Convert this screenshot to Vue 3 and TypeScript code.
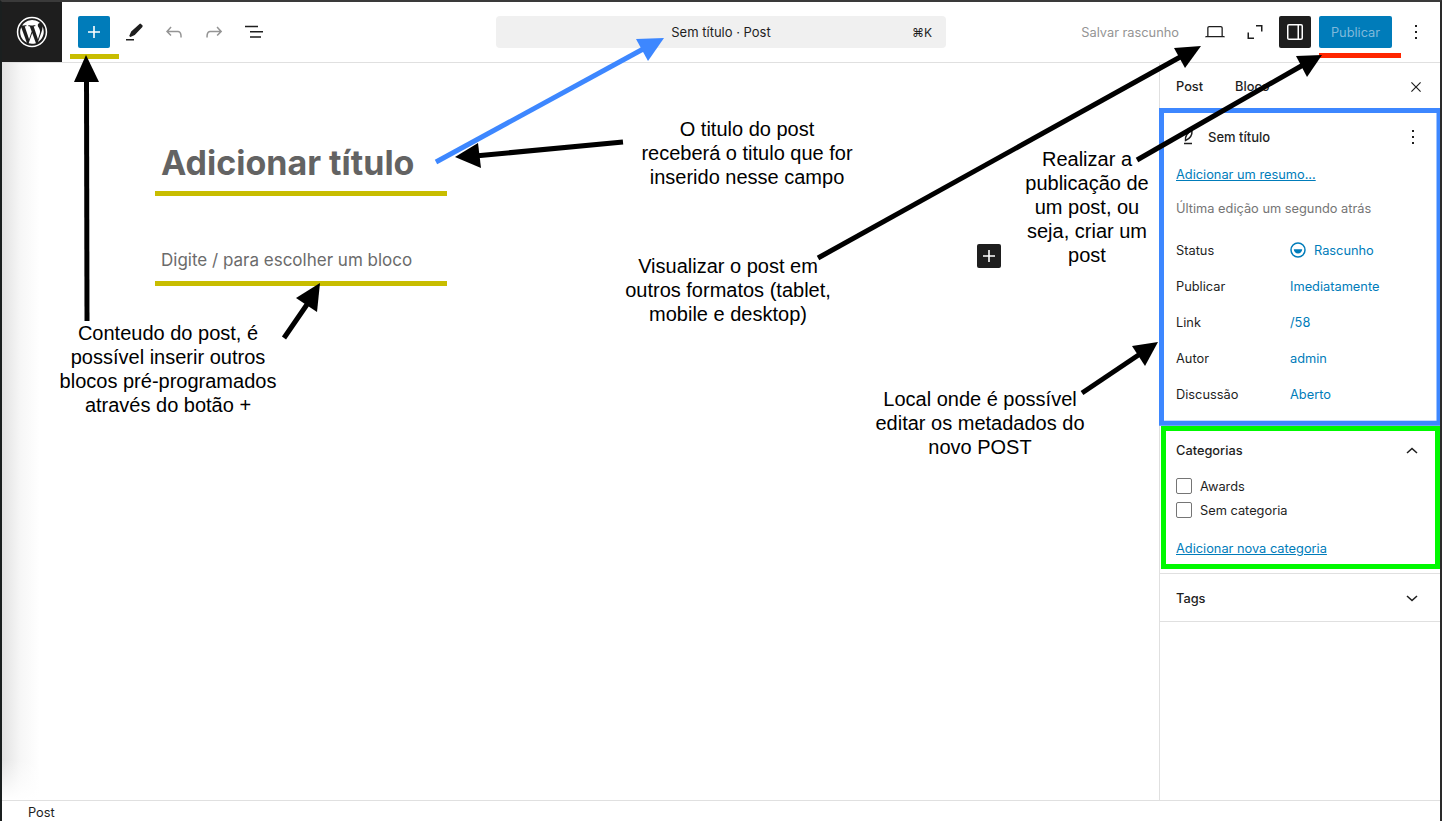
<script setup lang="ts">
interface Note {
  x: number
  y: number
  lines: string[]
}

interface Arrow {
  from: [number, number]
  to: [number, number]
  head: string
  color: string
}

const metaRows = [
  { label: 'Publicar', value: 'Imediatamente' },
  { label: 'Link', value: '/58' },
  { label: 'Autor', value: 'admin' },
  { label: 'Discussão', value: 'Aberto' }
]

const categories = ['Awards', 'Sem categoria']

const notes: Note[] = [
  { x: 168, y: 321, lines: ['Conteudo do post, é', 'possível inserir outros', 'blocos pré-programados', 'através do botão +'] },
  { x: 747, y: 117, lines: ['O titulo do post', 'receberá o titulo que for', 'inserido nesse campo'] },
  { x: 728, y: 254, lines: ['Visualizar o post em', 'outros formatos (tablet,', 'mobile e desktop)'] },
  { x: 1087, y: 147, lines: ['Realizar a', 'publicação de', 'um post, ou', 'seja, criar um', 'post'] },
  { x: 980, y: 387, lines: ['Local onde é possível', 'editar os metadados do', 'novo POST'] }
]

const arrows: Arrow[] = [
  { from: [87, 321], to: [86.5, 76], head: '86,55 74,82 99,82', color: '#000' },
  { from: [436, 162], to: [645, 48], head: '664,38 636,39 648,61', color: '#3d87ff' },
  { from: [623, 142], to: [475, 156], head: '455,157 478,143 481,168', color: '#000' },
  { from: [284, 338], to: [308, 303], head: '320,283 296,298 317,312', color: '#000' },
  { from: [818, 258], to: [1182, 56], head: '1201,46 1174,48 1185,68', color: '#000' },
  { from: [1137, 160], to: [1303, 65], head: '1322,55 1296,56 1307,77', color: '#000' },
  { from: [1082, 393], to: [1140, 354], head: '1158,342 1132,346 1145,366', color: '#000' }
]
</script>

<template>
  <div class="frame">
    <!-- Top bar -->
    <header class="topbar">
      <div class="logo">
        <svg viewBox="0 0 80 80" width="32" height="32" fill="#fff">
          <path d="M40 2a38 38 0 1 0 0 76 38 38 0 0 0 0-76zm0 3.8a34.2 34.2 0 1 1 0 68.4 34.2 34.2 0 0 1 0-68.4z" />
          <path d="M10.4 40c0 11.7 6.8 21.8 16.7 26.6L13 27.9A29.5 29.5 0 0 0 10.4 40zm49.6-1.5c0-3.7-1.3-6.2-2.5-8.2-1.5-2.5-3-4.6-3-7.1 0-2.8 2.1-5.4 5.1-5.4h.4A29.5 29.5 0 0 0 15.3 23.8h1.9c3.1 0 7.9-.4 7.9-.4 1.6-.1 1.8 2.3.2 2.4 0 0-1.6.2-3.4.3l10.8 32.2 6.5-19.5-4.6-12.7c-1.6-.1-3.1-.3-3.1-.3-1.6-.1-1.4-2.5.2-2.4 0 0 4.9.4 7.8.4 3.1 0 7.9-.4 7.9-.4 1.6-.1 1.8 2.3.2 2.4 0 0-1.6.2-3.4.3l10.7 31.9 3-9.9c1.3-4.1 2.2-7.1 2.2-9.6zM40.5 42.6l-8.9 25.8a29.6 29.6 0 0 0 18.2-.5l-.2-.4-9.1-24.9zm25.4-16.8c.1.9.2 2 .2 3.1 0 3-.6 6.4-2.2 10.7L54.9 65a29.6 29.6 0 0 0 11-39.2z" />
        </svg>
      </div>

      <div class="tools">
        <button class="icon-btn add" type="button" aria-label="Adicionar">
          <svg viewBox="0 0 24 24" width="24" height="24" fill="#fff"><path d="M11.2 6h1.6v5.2H18v1.6h-5.2V18h-1.6v-5.2H6v-1.6h5.2z" /></svg>
        </button>
        <button class="icon-btn" type="button" aria-label="Ferramentas">
          <svg viewBox="0 0 24 24" width="24" height="24" fill="#1e1e1e"><path d="M20.1 5.1 18.9 3.9a1 1 0 0 0-1.4 0L9.2 11.6l-2 4.4 1.2 1.1 4.4-2 7.6-8.2a1.3 1.3 0 0 0-.3-1.8zM4 19h8v1.5H4z" /></svg>
        </button>
        <button class="icon-btn" type="button" aria-label="Desfazer">
          <svg viewBox="0 0 24 24" width="24" height="24" fill="#949494"><path d="M18.3 11.7c-.6-.6-1.4-.9-2.3-.9H6.7l2.9-3.3-1.1-1-4.5 5L8.5 16l1-1-2.7-2.7H16c.5 0 .9.2 1.3.5 1 1 1 3.4 1 4.5v.3h1.5v-.2c0-1.5 0-4.3-1.5-5.7z" /></svg>
        </button>
        <button class="icon-btn" type="button" aria-label="Refazer">
          <svg viewBox="0 0 24 24" width="24" height="24" fill="#949494"><path d="M15.6 6.5l-1.1 1 2.9 3.3H8c-.9 0-1.7.3-2.3.9-1.4 1.5-1.4 4.2-1.4 5.6v.2h1.5v-.3c0-1.1 0-3.5 1-4.5.3-.3.7-.5 1.3-.5h9.2L14.6 15l1.1 1 4.5-4.5-4.6-5z" /></svg>
        </button>
        <button class="icon-btn" type="button" aria-label="Lista">
          <svg viewBox="0 0 24 24" width="24" height="24" fill="#1e1e1e"><path d="M3 6h13v1.5H3zM8 11.25h13v1.5H8zM8 16.5h11V18H8z" transform="translate(0 -.3)" /></svg>
        </button>
      </div>

      <div class="center">
        <div class="command">
          <span class="command-title">Sem título · Post</span>
          <span class="command-key">⌘K</span>
        </div>
      </div>

      <div class="actions">
        <span class="save">Salvar rascunho</span>
        <button class="icon-btn" type="button" aria-label="Visualizar">
          <svg viewBox="0 0 24 24" width="24" height="24" fill="#1e1e1e"><path d="M20.5 16h-.7V8c0-1.100-.9-2-2-2H6.200c-1.100 0-2 .9-2 2v8h-.7c-.8 0-1.500.7-1.500 1.200h20c0-.5-.7-1.200-1.500-1.200zM5.500 8c0-.3.2-.7.7-.7h11.600c.3 0 .7.3.7.7v8h-13V8z" /></svg>
        </button>
        <button class="icon-btn" type="button" aria-label="Tela cheia">
          <svg viewBox="0 0 24 24" width="24" height="24" fill="#1e1e1e"><path d="M6 12.5H4.5V19H11v-1.5H6zM13 5v1.5h5V11.5h1.5V5z" /></svg>
        </button>
        <button class="icon-btn dark" type="button" aria-label="Configurações">
          <svg viewBox="0 0 24 24" width="24" height="24" fill="#fff"><path d="M18 4H6a2 2 0 0 0-2 2v12c0 1.100.9 2 2 2h12a2 2 0 0 0 2-2V6a2 2 0 0 0-2-2zM5.500 18V6c0-.3.2-.5.5-.5h8.500v13H6a.5.5 0 0 1-.5-.5zm13 0c0 .3-.2.5-.5.5h-2V5.500h2c.3 0 .5.2.5.5v12z" /></svg>
        </button>
        <button class="publish" type="button">Publicar</button>
        <button class="icon-btn narrow" type="button" aria-label="Opções">
          <svg viewBox="0 0 24 24" width="24" height="24" fill="#1e1e1e"><path d="M11 5h2v2h-2zM11 11h2v2h-2zM11 17h2v2h-2z" /></svg>
        </button>
      </div>
    </header>

    <div class="main">
      <!-- Editor -->
      <section class="editor">
        <h1 class="title">Adicionar título</h1>
        <p class="placeholder">Digite / para escolher um bloco</p>
        <button class="block-add" type="button" aria-label="Adicionar bloco">
          <svg viewBox="0 0 24 24" width="24" height="24" fill="#fff"><path d="M11.200 6h1.600v5.200H18v1.600h-5.200V18h-1.600v-5.200H6v-1.600h5.200z" /></svg>
        </button>
      </section>

      <!-- Sidebar -->
      <aside class="sidebar">
        <div class="tabs">
          <span class="tab">Post</span>
          <span class="tab">Bloco</span>
          <svg class="close" viewBox="0 0 24 24" width="20" height="20" fill="#1e1e1e"><path d="m13 12 5-5-1-1-5 5-5-5-1 1 5 5-5 5 1 1 5-5 5 5 1-1z" /></svg>
        </div>

        <div class="panel summary">
          <div class="summary-head">
            <svg viewBox="0 0 24 24" width="24" height="24" fill="none" stroke="#1e1e1e" stroke-width="1.500"><path d="M9.500 15.500C9 11 11.500 7.500 16 5.500c.3 4.500-1.500 8-6.500 10zM8 18.500h8" /></svg>
            <span class="summary-title">Sem título</span>
            <svg class="more" viewBox="0 0 24 24" width="24" height="24" fill="#1e1e1e"><path d="M11 5h2v2h-2zM11 11h2v2h-2zM11 17h2v2h-2z" /></svg>
          </div>
          <a class="link" href="#">Adicionar um resumo...</a>
          <p class="edited">Última edição um segundo atrás</p>
          <div class="meta-row">
            <span class="meta-label">Status</span>
            <span class="meta-value status">
              <svg viewBox="0 0 16 16" width="16" height="16">
                <circle cx="8" cy="8" r="7" fill="none" stroke="#007cba" stroke-width="1.500" />
                <path d="M3.800 7.200h8.400a4.200 4.200 0 0 1-8.400 0z" fill="#007cba" />
              </svg>
              Rascunho
            </span>
          </div>
          <div v-for="row in metaRows" :key="row.label" class="meta-row">
            <span class="meta-label">{{ row.label }}</span>
            <span class="meta-value">{{ row.value }}</span>
          </div>
        </div>

        <div class="panel categories">
          <div class="panel-head">
            <span>Categorias</span>
            <svg viewBox="0 0 24 24" width="24" height="24" fill="#1e1e1e"><path d="M6.500 14.500 12 9.500l5.500 5-1 1.100-4.500-4.100-4.500 4.100z" /></svg>
          </div>
          <label v-for="cat in categories" :key="cat" class="check">
            <span class="box"></span>
            {{ cat }}
          </label>
          <a class="link add-cat" href="#">Adicionar nova categoria</a>
        </div>

        <div class="panel tags">
          <div class="panel-head">
            <span>Tags</span>
            <svg viewBox="0 0 24 24" width="24" height="24" fill="#1e1e1e"><path d="M17.500 9.500 12 14.500l-5.500-5 1-1.100 4.500 4.100 4.500-4.100z" /></svg>
          </div>
        </div>
      </aside>
    </div>

    <footer class="statusbar">Post</footer>

    <!-- Annotation layer drawn over the screenshot -->
    <svg class="marks" viewBox="0 0 1442 821" width="1442" height="821">
      <rect x="70" y="54" width="49" height="5" fill="#c8bd00" />
      <rect x="155" y="191" width="292" height="5" fill="#c8bd00" />
      <rect x="155" y="281" width="292" height="5" fill="#c8bd00" />
      <rect x="1319" y="53" width="82" height="5" fill="#ff2600" />
      <rect x="1161.500" y="110.500" width="277.500" height="312.700" fill="none" stroke="#3d87ff" stroke-width="5" />
      <rect x="1163.500" y="428.500" width="274" height="138" fill="none" stroke="#00f900" stroke-width="5" />
      <g v-for="(arrow, i) in arrows" :key="i">
        <line
          :x1="arrow.from[0]"
          :y1="arrow.from[1]"
          :x2="arrow.to[0]"
          :y2="arrow.to[1]"
          :stroke="arrow.color"
          stroke-width="5"
        />
        <polygon :points="arrow.head" :fill="arrow.color" />
      </g>
    </svg>

    <div
      v-for="note in notes"
      :key="note.lines[0]"
      class="note"
      :style="{ left: note.x - 150 + 'px', top: note.y + 'px' }"
    >
      <div v-for="line in note.lines" :key="line">{{ line }}</div>
    </div>
  </div>
</template>

<style scoped>
.frame {
  position: relative;
  width: 1442px;
  height: 821px;
  box-sizing: border-box;
  border-top: 2px solid #3a3a3a;
  border-left: 2px solid #1a1f1f;
  border-right: 2px solid #2a2a2a;
  display: flex;
  flex-direction: column;
  overflow: hidden;
  background: #fff;
  font-family: Inter, "Liberation Sans", sans-serif;
  color: #1e1e1e;
}

/* TOP BAR */
.topbar {
  display: flex;
  align-items: center;
  height: 60px;
  flex-shrink: 0;
  border-bottom: 1px solid #e0e0e0;
}

.logo {
  width: 60px;
  height: 60px;
  background: #1e1e1e;
  display: flex;
  align-items: center;
  justify-content: center;
  flex-shrink: 0;
}

.tools {
  display: flex;
  align-items: center;
  gap: 8px;
  padding-left: 16px;
  width: 300px;
  box-sizing: border-box;
}

.icon-btn {
  width: 32px;
  height: 32px;
  padding: 0;
  border: none;
  border-radius: 2px;
  background: transparent;
  display: flex;
  align-items: center;
  justify-content: center;
  flex-shrink: 0;
}

.icon-btn.add {
  background: #007cba;
}

.icon-btn.dark {
  background: #1e1e1e;
}

.icon-btn.narrow {
  width: 24px;
  margin-left: 4px;
}

.center {
  width: 634px;
  padding-left: 134px;
  box-sizing: border-box;
  flex-shrink: 0;
}

.command {
  width: 450px;
  height: 32px;
  box-sizing: border-box;
  border-radius: 4px;
  background: #f0f0f0;
  position: relative;
  display: flex;
  align-items: center;
  justify-content: center;
  font-size: 13px;
  color: #1e1e1e;
}

.command-key {
  position: absolute;
  right: 14px;
  font-size: 12px;
}

.actions {
  display: flex;
  align-items: center;
  flex: 1;
  justify-content: flex-end;
  gap: 8px;
  padding-right: 12px;
}

.save {
  font-size: 12.800px;
  color: #949494;
  margin-right: 12px;
  white-space: nowrap;
}

.publish {
  width: 73px;
  height: 32px;
  border: none;
  border-radius: 2px;
  background: #007cba;
  color: #7fb9db;
  font-family: inherit;
  font-size: 12.800px;
  padding: 0;
}

/* MAIN */
.main {
  flex: 1;
  display: flex;
  min-height: 0;
}

.editor {
  position: relative;
  flex: 1;
  padding: 78px 0 0 159px;
  background:
    linear-gradient(to bottom, rgba(255, 255, 255, 0) calc(100% - 40px), #fff),
    linear-gradient(to right, #e2e2e2, #f6f6f6 18px, #fff 38px);
}

.title {
  margin: 0;
  font-size: 34px;
  line-height: 44px;
  font-weight: 700;
  color: #636363;
}

.placeholder {
  margin: 63px 0 0;
  font-size: 17px;
  line-height: 24px;
  color: #6b6b6b;
}

.block-add {
  position: absolute;
  left: 975px;
  top: 181px;
  width: 24px;
  height: 24px;
  padding: 0;
  border: none;
  border-radius: 2px;
  background: #1e1e1e;
}

.block-add svg {
  display: block;
}

/* SIDEBAR */
.sidebar {
  width: 281px;
  flex-shrink: 0;
  border-left: 1px solid #e0e0e0;
  box-sizing: border-box;
  background: #fff;
  font-size: 12.800px;
}

.tabs {
  display: flex;
  align-items: center;
  height: 47px;
  padding: 0 14px 0 16px;
  gap: 32px;
  font-weight: 500;
}

.close {
  margin-left: auto;
}

.panel {
  border-bottom: 1px solid #e0e0e0;
  padding: 0 16px;
}

.summary {
  height: 316px;
  box-sizing: border-box;
  padding-top: 15px;
}

.summary-head {
  display: flex;
  align-items: center;
  height: 24px;
  gap: 8px;
  font-weight: 500;
  margin-bottom: 17px;
}

.summary-head .more {
  margin-left: auto;
  margin-right: -1px;
}

.summary-title {
  font-size: 13px;
}

.link {
  color: #007cba;
  text-decoration: underline;
  font-size: 12.800px;
  line-height: 18px;
  display: inline-block;
}

.edited {
  margin: 16px 0 14px;
  color: #757575;
  font-size: 12.800px;
  line-height: 18px;
}

.meta-row {
  display: flex;
  align-items: center;
  height: 36px;
  white-space: nowrap;
}

.meta-label {
  width: 114px;
  flex-shrink: 0;
}

.meta-value {
  color: #007cba;
  display: flex;
  align-items: center;
  gap: 8px;
}

.categories {
  height: 148px;
  box-sizing: border-box;
}

.panel-head {
  display: flex;
  align-items: center;
  justify-content: space-between;
  height: 47px;
  font-weight: 500;
}

.categories .panel-head {
  height: 48px;
}

.check {
  display: flex;
  align-items: center;
  gap: 8px;
  height: 24px;
  white-space: nowrap;
}

.box {
  width: 16px;
  height: 16px;
  box-sizing: border-box;
  border: 1px solid #757575;
  border-radius: 2px;
}

.add-cat {
  margin-top: 18px;
}

.tags {
  height: 48px;
  box-sizing: border-box;
  padding-top: 1px;
}

/* STATUS BAR */
.statusbar {
  height: 20px;
  flex-shrink: 0;
  border-top: 1px solid #e0e0e0;
  padding-left: 26px;
  font-size: 12.800px;
  line-height: 24px;
  background: #fff;
}

/* ANNOTATIONS */
.marks {
  position: absolute;
  left: -2px;
  top: -2px;
  pointer-events: none;
}

.note {
  position: absolute;
  width: 300px;
  margin-left: -2px;
  margin-top: -2px;
  text-align: center;
  font-family: "Liberation Sans", Arial, sans-serif;
  font-size: 20px;
  line-height: 24px;
  color: #000;
}
</style>

<style>
html,
body {
  margin: 0;
  background: #fff;
}
</style>
